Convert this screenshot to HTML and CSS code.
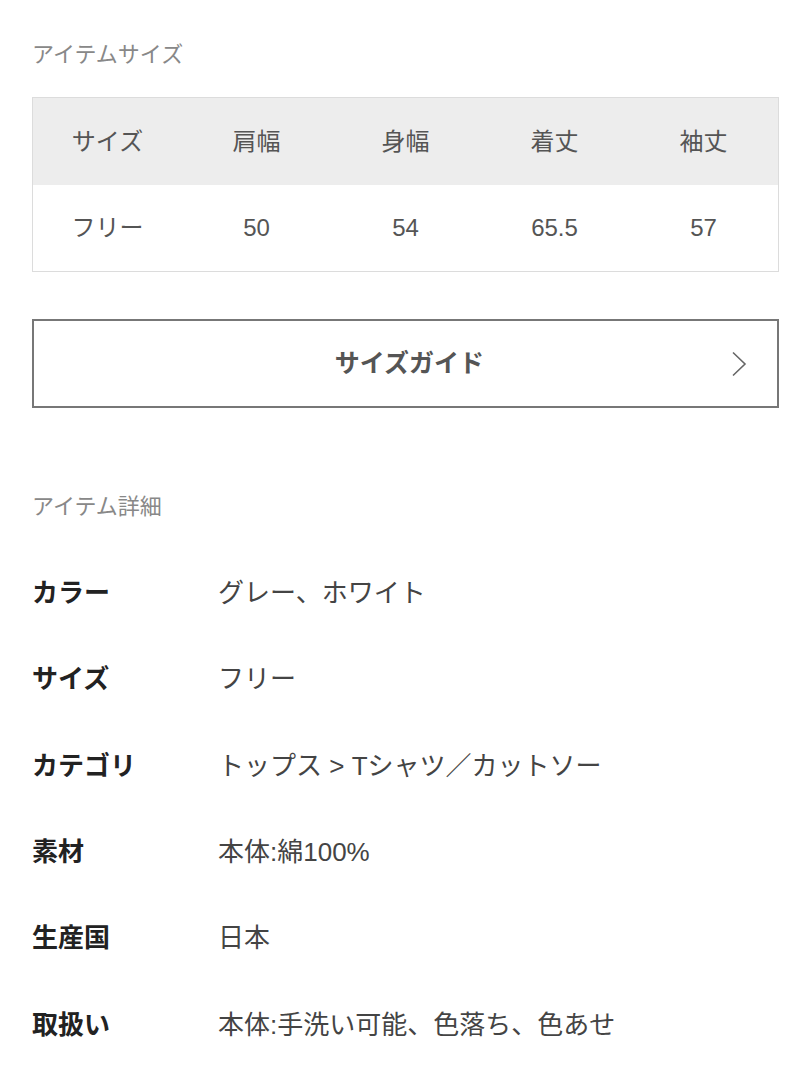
FILE: index.html
```html
<!DOCTYPE html>
<html lang="ja">
<head>
  <meta charset="UTF-8" />
  <meta name="viewport" content="width=device-width, initial-scale=1.0"/>
  <title>アイテム情報</title>
  <link rel="stylesheet" href="styles.css">
</head>
<body>
  <div class="item-info">
    <!-- サイズ表 -->
    <h2 class="section-title">アイテムサイズ</h2>
    <div class="size-table">
      <div class="size-row size-head">
        <div class="cell">サイズ</div>
        <div class="cell">肩幅</div>
        <div class="cell">身幅</div>
        <div class="cell">着丈</div>
        <div class="cell">袖丈</div>
      </div>
      <div class="size-row">
        <div class="cell">フリー</div>
        <div class="cell">50</div>
        <div class="cell">54</div>
        <div class="cell">65.5</div>
        <div class="cell">57</div>
      </div>
    </div>

    <a class="guide-button" href="#">
      <span class="guide-label">サイズガイド</span>
      <svg class="chevron" width="16" height="26" viewBox="0 0 16 26">
        <path d="M2 1.5 L14 13 L2 24.5" fill="none" stroke="#666" stroke-width="1.6"/>
      </svg>
    </a>

    <!-- 詳細 -->
    <h2 class="section-title detail-title">アイテム詳細</h2>
    <div class="details">
      <div class="detail-row"><div class="detail-label">カラー</div><div class="detail-value">グレー、ホワイト</div></div>
      <div class="detail-row"><div class="detail-label">サイズ</div><div class="detail-value">フリー</div></div>
      <div class="detail-row"><div class="detail-label">カテゴリ</div><div class="detail-value">トップス &gt; Tシャツ／カットソー</div></div>
      <div class="detail-row"><div class="detail-label">素材</div><div class="detail-value">本体:綿100%</div></div>
      <div class="detail-row"><div class="detail-label">生産国</div><div class="detail-value">日本</div></div>
      <div class="detail-row"><div class="detail-label">取扱い</div><div class="detail-value">本体:手洗い可能、色落ち、色あせ</div></div>
    </div>
  </div>
</body>
</html>
```

FILE: styles.css
```css
* {
  box-sizing: border-box;
  margin: 0;
  padding: 0;
}
body {
  /* 英数字は Helvetica 風、和文は Noto */
  font-family: "Liberation Sans", "Noto Sans CJK JP", sans-serif;
  background-color: #fff;
  color: #333;
}
.item-info {
  padding: 40px 33px 0 32px;
}
/* 見出し */
.section-title {
  font-size: 22px;
  font-weight: normal;
  line-height: 30px;
  color: #888;
}
/* サイズ表 */
.size-table {
  margin-top: 27px;
  border: 1px solid #dcdcdc;
}
.size-row {
  display: grid;
  grid-template-columns: repeat(5, 1fr);
  align-items: center;
  height: 86px;
  font-size: 24px;
  color: #555;
}
.size-head {
  height: 87px;
  background-color: #ededed;
}
.cell {
  text-align: center;
  line-height: 30px;
}
/* サイズガイドボタン */
.guide-button {
  margin-top: 47px;
  height: 89px;
  border: 2px solid #777;
  display: flex;
  align-items: center;
  justify-content: center;
  position: relative;
  padding-bottom: 1px;
  text-decoration: none;
}
.guide-label {
  font-size: 25px;
  font-weight: bold;
  line-height: 30px;
  color: #555;
  margin-left: 8px;
}
.chevron {
  position: absolute;
  right: 30px;
  top: 30px;
}
/* 詳細 */
.detail-title {
  margin-top: 84px;
}
.details {
  margin-top: 28px;
}
.detail-row {
  display: flex;
  align-items: center;
  height: 86.3px;
  font-size: 26px;
  line-height: 32px;
}
.detail-label {
  width: 186px;
  font-weight: bold;
  color: #222;
}
.detail-value {
  color: #444;
}
```
